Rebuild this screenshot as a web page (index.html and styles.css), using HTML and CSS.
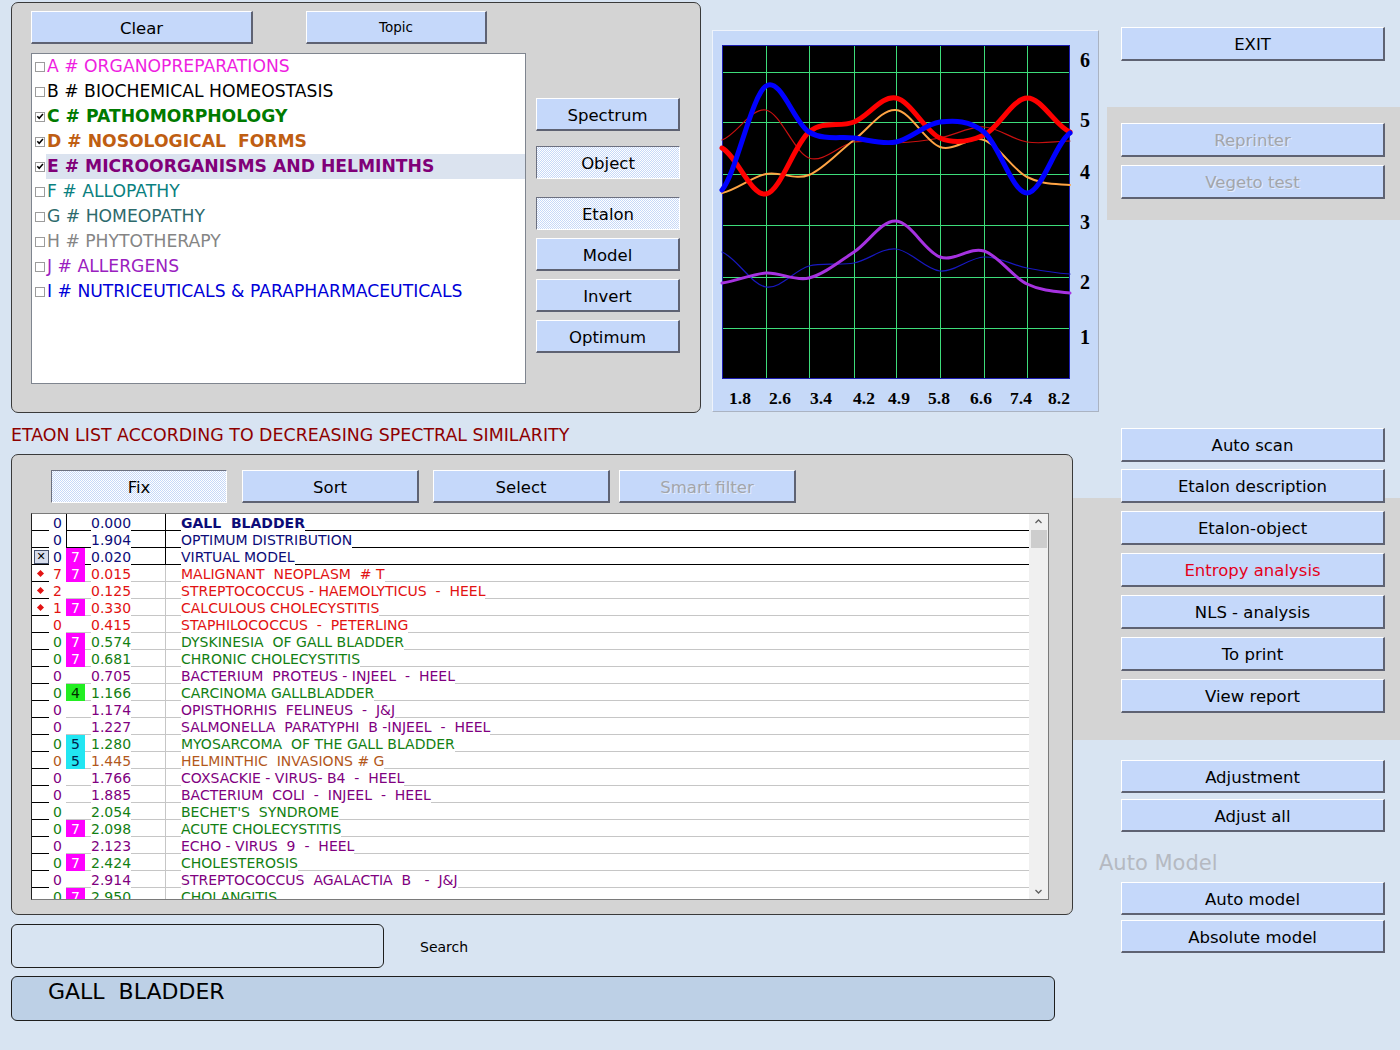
FILE: index.html
```html
<!DOCTYPE html>
<html>
<head>
<meta charset="utf-8">
<title>Etalon list</title>
<link rel="stylesheet" href="styles.css">
</head>
<body>
<div class="app">
  <div class="left">
    <div class="top-row">
      <section class="panel topic-panel">
        <div class="topic-head">
          <div class="btn clear-btn">Clear</div>
          <div class="btn topic-btn">Topic</div>
        </div>
        <div class="topic-body">
          <div class="listbox">
            <div class="item c-a"><span class="cb"></span><span class="it">A # ORGANOPREPARATIONS</span></div>
            <div class="item c-b"><span class="cb"></span><span class="it">B # BIOCHEMICAL HOMEOSTASIS</span></div>
            <div class="item c-c bold"><span class="cb"><svg viewBox="0 0 9 9" width="9" height="9"><path d="M1.5 4.3 L3.6 6.6 L7.8 1.8" fill="none" stroke="#000" stroke-width="1.7"/></svg></span><span class="it">C # PATHOMORPHOLOGY</span></div>
            <div class="item c-d bold"><span class="cb"><svg viewBox="0 0 9 9" width="9" height="9"><path d="M1.5 4.3 L3.6 6.6 L7.8 1.8" fill="none" stroke="#000" stroke-width="1.7"/></svg></span><span class="it">D # NOSOLOGICAL  FORMS</span></div>
            <div class="item c-e bold sel"><span class="cb"><svg viewBox="0 0 9 9" width="9" height="9"><path d="M1.5 4.3 L3.6 6.6 L7.8 1.8" fill="none" stroke="#000" stroke-width="1.7"/></svg></span><span class="it">E # MICROORGANISMS AND HELMINTHS</span></div>
            <div class="item c-f"><span class="cb"></span><span class="it">F # ALLOPATHY</span></div>
            <div class="item c-g"><span class="cb"></span><span class="it">G # HOMEOPATHY</span></div>
            <div class="item c-h"><span class="cb"></span><span class="it">H # PHYTOTHERAPY</span></div>
            <div class="item c-j"><span class="cb"></span><span class="it">J # ALLERGENS</span></div>
            <div class="item c-i"><span class="cb"></span><span class="it">I # NUTRICEUTICALS &amp; PARAPHARMACEUTICALS</span></div>
          </div>
          <div class="side-btns">
            <div class="btn sb-spectrum">Spectrum</div>
            <div class="btn pressed sb-object">Object</div>
            <div class="btn pressed sb-etalon">Etalon</div>
            <div class="btn sb-next">Model</div>
            <div class="btn sb-next">Invert</div>
            <div class="btn sb-next">Optimum</div>
          </div>
        </div>
      </section>
      <section class="chart-panel">
        <svg class="chart" width="385" height="380" viewBox="712 31 385 380">
          <rect x="721.5" y="45.5" width="347" height="333" fill="#000" stroke="#1c1cb0"/>
          <g stroke="#3ddc7a" stroke-width="1">
            <line x1="765.5" y1="46" x2="765.5" y2="378"/>
            <line x1="808.5" y1="46" x2="808.5" y2="378"/>
            <line x1="853.5" y1="46" x2="853.5" y2="378"/>
            <line x1="895.5" y1="46" x2="895.5" y2="378"/>
            <line x1="939.5" y1="46" x2="939.5" y2="378"/>
            <line x1="983.5" y1="46" x2="983.5" y2="378"/>
            <line x1="1026.5" y1="46" x2="1026.5" y2="378"/>
            <line x1="722" y1="72.5" x2="1068" y2="72.5"/>
            <line x1="722" y1="122.5" x2="1068" y2="122.5"/>
            <line x1="722" y1="174.5" x2="1068" y2="174.5"/>
            <line x1="722" y1="225.5" x2="1068" y2="225.5"/>
            <line x1="722" y1="277.5" x2="1068" y2="277.5"/>
            <line x1="722" y1="328.5" x2="1068" y2="328.5"/>
          </g>
          <g fill="none" stroke-linecap="round" stroke-linejoin="round">
            <path stroke="#1818c0" stroke-width="1.2" d="M721 252 C735.5 257.8 750.5 284.7 765 287 C779.5 289.3 793.5 270 808 266 C822.5 262 838.5 265.8 853 263 C867.5 260.2 880.5 247.7 895 249 C909.5 250.3 924.5 269.7 939 271 C953.5 272.3 968.5 257.5 983 257 C997.5 256.5 1011.5 265.2 1026 268 C1040.5 270.8 1054.5 273 1069 274"/>
            <path stroke="#a632e0" stroke-width="3" d="M721 283 C735.5 281.3 750.5 273.8 765 273 C779.5 272.2 793.5 281.5 808 278 C822.5 274.5 838.5 261.5 853 252 C867.5 242.5 880.5 220.2 895 221 C909.5 221.8 924.5 252 939 257 C953.5 262 968.5 246.5 983 251 C997.5 255.5 1011.5 277 1026 284 C1040.5 291 1054.5 291.5 1069 293"/>
            <path stroke="#c81010" stroke-width="1.2" d="M721 140 C735.5 135 750.5 107 765 110 C779.5 113 793.5 152.7 808 158 C822.5 163.3 838.5 144.5 853 142 C867.5 139.5 880.5 143.7 895 143 C909.5 142.3 924.5 140.7 939 138 C953.5 135.3 968.5 126.3 983 127 C997.5 127.7 1011.5 139.7 1026 142 C1040.5 144.3 1054.5 141.2 1069 141"/>
            <path stroke="#ffa444" stroke-width="2" d="M721 193 C735.5 189.8 750.5 177 765 174 C779.5 171 793.5 180.7 808 175 C822.5 169.3 838.5 150.8 853 140 C867.5 129.2 880.5 108.8 895 110 C909.5 111.2 924.5 142 939 147 C953.5 152 968.5 135 983 140 C997.5 145 1011.5 169.5 1026 177 C1040.5 184.5 1054.5 183.7 1069 185"/>
            <path stroke="#ff0000" stroke-width="5" d="M721 148 C735.5 155.7 750.5 196.7 765 194 C779.5 191.3 793.5 144 808 132 C822.5 120 838.5 127.7 853 122 C867.5 116.3 880.5 95.3 895 98 C909.5 100.7 924.5 131.8 939 138 C953.5 144.2 968.5 141.7 983 135 C997.5 128.3 1011.5 98.5 1026 98 C1040.5 97.5 1054.5 126.3 1069 132"/>
            <path stroke="#0000ff" stroke-width="5" d="M721 190 C735.5 172.7 750.5 95.7 765 86 C779.5 76.3 793.5 123.3 808 132 C822.5 140.7 838.5 136.3 853 138 C867.5 139.7 880.5 144.7 895 142 C909.5 139.3 924.5 123.7 939 122 C953.5 120.3 968.5 120.2 983 132 C997.5 143.8 1011.5 192.8 1026 193 C1040.5 193.2 1054.5 143 1069 133"/>
          </g>
          <g class="ax" text-anchor="middle">
            <text x="1084" y="67">6</text>
            <text x="1084" y="127">5</text>
            <text x="1084" y="179">4</text>
            <text x="1084" y="229">3</text>
            <text x="1084" y="289">2</text>
            <text x="1084" y="344">1</text>
          </g>
          <g class="ax ax-x" text-anchor="middle">
            <text x="739" y="404">1.8</text>
            <text x="779" y="404">2.6</text>
            <text x="820" y="404">3.4</text>
            <text x="863" y="404">4.2</text>
            <text x="898" y="404">4.9</text>
            <text x="938" y="404">5.8</text>
            <text x="980" y="404">6.6</text>
            <text x="1020" y="404">7.4</text>
            <text x="1058" y="404">8.2</text>
          </g>
        </svg>
      </section>
    </div>

    <h1 class="list-title">ETAON LIST ACCORDING TO DECREASING SPECTRAL SIMILARITY</h1>

    <section class="panel list-panel">
      <div class="tool-row">
        <div class="btn pressed tb-fix">Fix</div>
        <div class="btn tb-sort">Sort</div>
        <div class="btn tb-select">Select</div>
        <div class="btn disabled tb-smart">Smart filter</div>
      </div>
      <div class="grid">
        <div class="rows">
          <div class="row hd nv"><span class="mk"></span><span class="n">0</span><span class="b vl"></span><span class="v"><span class="t">0.000</span></span><span class="nm"><span class="t strong">GALL  BLADDER</span></span></div>
          <div class="row hd nv"><span class="mk"></span><span class="n">0</span><span class="b vl"></span><span class="v"><span class="t">1.904</span></span><span class="nm"><span class="t">OPTIMUM DISTRIBUTION</span></span></div>
          <div class="row hd nv"><span class="mk"><span class="xbox">✕</span></span><span class="n">0</span><span class="b m">7</span><span class="v"><span class="t">0.020</span></span><span class="nm"><span class="t">VIRTUAL MODEL</span></span></div>
          <div class="row rd"><span class="mk"><span class="dot"></span></span><span class="n">7</span><span class="b m">7</span><span class="v"><span class="t">0.015</span></span><span class="nm"><span class="t">MALIGNANT  NEOPLASM  # T</span></span></div>
          <div class="row rd"><span class="mk"><span class="dot"></span></span><span class="n">2</span><span class="b"></span><span class="v"><span class="t">0.125</span></span><span class="nm"><span class="t">STREPTOCOCCUS - HAEMOLYTICUS  -  HEEL</span></span></div>
          <div class="row rd"><span class="mk"><span class="dot"></span></span><span class="n">1</span><span class="b m">7</span><span class="v"><span class="t">0.330</span></span><span class="nm"><span class="t">CALCULOUS CHOLECYSTITIS</span></span></div>
          <div class="row rd"><span class="mk"></span><span class="n">0</span><span class="b"></span><span class="v"><span class="t">0.415</span></span><span class="nm"><span class="t">STAPHILOCOCCUS  -  PETERLING</span></span></div>
          <div class="row gr"><span class="mk"></span><span class="n">0</span><span class="b m">7</span><span class="v"><span class="t">0.574</span></span><span class="nm"><span class="t">DYSKINESIA  OF GALL BLADDER</span></span></div>
          <div class="row gr"><span class="mk"></span><span class="n">0</span><span class="b m">7</span><span class="v"><span class="t">0.681</span></span><span class="nm"><span class="t">CHRONIC CHOLECYSTITIS</span></span></div>
          <div class="row pu"><span class="mk"></span><span class="n">0</span><span class="b"></span><span class="v"><span class="t">0.705</span></span><span class="nm"><span class="t">BACTERIUM  PROTEUS - INJEEL  -  HEEL</span></span></div>
          <div class="row gr"><span class="mk"></span><span class="n">0</span><span class="b g">4</span><span class="v"><span class="t">1.166</span></span><span class="nm"><span class="t">CARCINOMA GALLBLADDER</span></span></div>
          <div class="row pu"><span class="mk"></span><span class="n">0</span><span class="b"></span><span class="v"><span class="t">1.174</span></span><span class="nm"><span class="t">OPISTHORHIS  FELINEUS  -  J&amp;J</span></span></div>
          <div class="row pu"><span class="mk"></span><span class="n">0</span><span class="b"></span><span class="v"><span class="t">1.227</span></span><span class="nm"><span class="t">SALMONELLA  PARATYPHI  B -INJEEL  -  HEEL</span></span></div>
          <div class="row gr"><span class="mk"></span><span class="n">0</span><span class="b c">5</span><span class="v"><span class="t">1.280</span></span><span class="nm"><span class="t">MYOSARCOMA  OF THE GALL BLADDER</span></span></div>
          <div class="row br"><span class="mk"></span><span class="n">0</span><span class="b c">5</span><span class="v"><span class="t">1.445</span></span><span class="nm"><span class="t">HELMINTHIC  INVASIONS # G</span></span></div>
          <div class="row pu"><span class="mk"></span><span class="n">0</span><span class="b"></span><span class="v"><span class="t">1.766</span></span><span class="nm"><span class="t">COXSACKIE - VIRUS- B4  -  HEEL</span></span></div>
          <div class="row pu"><span class="mk"></span><span class="n">0</span><span class="b"></span><span class="v"><span class="t">1.885</span></span><span class="nm"><span class="t">BACTERIUM  COLI  -  INJEEL  -  HEEL</span></span></div>
          <div class="row gr"><span class="mk"></span><span class="n">0</span><span class="b"></span><span class="v"><span class="t">2.054</span></span><span class="nm"><span class="t">BECHET'S  SYNDROME</span></span></div>
          <div class="row gr"><span class="mk"></span><span class="n">0</span><span class="b m">7</span><span class="v"><span class="t">2.098</span></span><span class="nm"><span class="t">ACUTE CHOLECYSTITIS</span></span></div>
          <div class="row pu"><span class="mk"></span><span class="n">0</span><span class="b"></span><span class="v"><span class="t">2.123</span></span><span class="nm"><span class="t">ECHO - VIRUS  9  -  HEEL</span></span></div>
          <div class="row gr"><span class="mk"></span><span class="n">0</span><span class="b m">7</span><span class="v"><span class="t">2.424</span></span><span class="nm"><span class="t">CHOLESTEROSIS</span></span></div>
          <div class="row pu"><span class="mk"></span><span class="n">0</span><span class="b"></span><span class="v"><span class="t">2.914</span></span><span class="nm"><span class="t">STREPTOCOCCUS  AGALACTIA  B   -  J&amp;J</span></span></div>
          <div class="row gr"><span class="mk"></span><span class="n">0</span><span class="b m">7</span><span class="v"><span class="t">2.950</span></span><span class="nm"><span class="t">CHOLANGITIS</span></span></div>
        </div>
        <div class="scrollbar">
          <svg class="arr" width="19" height="14" viewBox="0 0 19 14"><path d="M6.5 9 L9.5 6 L12.5 9" fill="none" stroke="#606060" stroke-width="1.3"/></svg>
          <div class="thumb"></div>
          <div class="track"></div>
          <svg class="arr" width="19" height="14" viewBox="0 0 19 14"><path d="M6.5 5 L9.5 8 L12.5 5" fill="none" stroke="#606060" stroke-width="1.3"/></svg>
        </div>
      </div>
    </section>

    <div class="search-row">
      <div class="search-box"></div>
      <span class="search-label">Search</span>
    </div>
    <div class="result-box">GALL  BLADDER</div>
  </div>

  <aside class="right">
    <div class="btn rbtn exit">EXIT</div>
    <div class="band band1">
      <div class="btn rbtn disabled">Reprinter</div>
      <div class="btn rbtn disabled">Vegeto test</div>
    </div>
    <div class="btn rbtn autoscan">Auto scan</div>
    <div class="btn rbtn etdesc">Etalon description</div>
    <div class="band band2">
      <div class="btn rbtn">Etalon-object</div>
      <div class="btn rbtn red">Entropy analysis</div>
      <div class="btn rbtn">NLS - analysis</div>
      <div class="btn rbtn">To print</div>
      <div class="btn rbtn">View report</div>
    </div>
    <div class="btn rbtn adjust">Adjustment</div>
    <div class="btn rbtn adjall">Adjust all</div>
    <div class="automodel-label">Auto Model</div>
    <div class="btn rbtn automodel">Auto model</div>
    <div class="btn rbtn absmodel">Absolute model</div>
  </aside>
</div>
</body>
</html>
```

FILE: styles.css
```css
* { box-sizing: border-box; }

html, body {
  margin: 0;
  padding: 0;
}

body {
  width: 1400px;
  height: 1050px;
  overflow: hidden;
  background: #d8e4f2;
  font-family: "DejaVu Sans", sans-serif;
  color: #000;
}

.app {
  display: flex;
  align-items: flex-start;
  height: 1050px;
}

.left {
  width: 1073px;
  flex: none;
  padding-left: 11px;
}

/* ---------- generic buttons ---------- */
.btn {
  height: 33px;
  padding-top: 3px;
  background: #c5d8fa;
  border-style: solid;
  border-width: 1px 2px 2px 1px;
  border-color: #ffffff #5e6272 #5e6272 #ffffff;
  display: flex;
  align-items: center;
  justify-content: center;
  font-size: 16.5px;
  line-height: 20px;
  white-space: pre;
  color: #000;
}

.btn.pressed {
  border-width: 1px;
  border-color: #6c7080 #ffffff #ffffff #6c7080;
  background: repeating-conic-gradient(#c6d8f8 0 25%, #ffffff 0 50%) 0 0 / 2px 2px;
}

.btn.disabled {
  color: #a3a5aa;
  text-shadow: 1px 1px 0 rgba(255, 255, 255, 0.55);
}

.btn.red { color: #e4001a; }

/* ---------- panels ---------- */
.panel {
  background: #d4d4d4;
  border: 1px solid #3a3a3a;
  border-radius: 7px;
}

.top-row {
  display: flex;
  align-items: flex-start;
  padding-top: 2px;
}

.topic-panel {
  flex: none;
  width: 690px;
  height: 411px;
  padding: 8px 0 0 19px;
}

.topic-head {
  display: flex;
}

.clear-btn { width: 222px; }

.topic-btn {
  width: 181px;
  margin-left: 53px;
  font-size: 13.5px;
  padding-top: 0;
}

.topic-body {
  display: flex;
  margin-top: 9px;
}

.listbox {
  width: 495px;
  height: 331px;
  background: #fff;
  border: 1px solid #7f858f;
  padding: 0 0 0 3px;
}

.item {
  display: flex;
  align-items: center;
  height: 25px;
  font-size: 17.2px;
  line-height: 25px;
  white-space: pre;
}

.item.bold { font-weight: bold; }

.cb {
  width: 10px;
  height: 10px;
  flex: none;
  border: 1px solid #9c9c9c;
  background: #fff;
  display: flex;
  align-items: center;
  justify-content: center;
  margin-right: 1px;
}

.cb svg { display: block; }

.it {
  flex: 1;
  padding-left: 1px;
  height: 25px;
}

.sel .it { background: #dbe3ef; }

.c-a { color: #ee1ee0; }
.c-b { color: #000; }
.c-c { color: #007a00; }
.c-d { color: #bf5e12; }
.c-e { color: #800078; }
.c-f { color: #0a8080; }
.c-g { color: #2d6a6c; }
.c-h { color: #858585; }
.c-j { color: #9a20c0; }
.c-i { color: #0000d8; }

.side-btns {
  margin-left: 10px;
  width: 144px;
  display: flex;
  flex-direction: column;
}

.side-btns .btn { height: 33px; }
.sb-spectrum { margin-top: 45px; }
.sb-object { margin-top: 15px; }
.sb-etalon { margin-top: 18px; }
.sb-next { margin-top: 8px; }

/* ---------- chart ---------- */
.chart-panel {
  flex: none;
  width: 387px;
  height: 382px;
  margin: 28px 0 0 11px;
  background: #c6d9f8;
  border: 1px solid #aab3c2;
  border-top-color: #eef3fb;
  border-left-color: #eef3fb;
}

.chart { display: block; }

.ax text {
  font-family: "Liberation Serif", serif;
  font-weight: bold;
  font-size: 20px;
  fill: #000;
}

.ax-x text { font-size: 17.5px; }

/* ---------- list ---------- */
.list-title {
  margin: 12px 0 9px 0;
  height: 20px;
  font-size: 17.4px;
  line-height: 20px;
  font-weight: normal;
  color: #8e0000;
  white-space: nowrap;
}

.list-panel {
  width: 1062px;
  height: 461px;
  padding: 15px 0 0 19px;
}

.tool-row {
  display: flex;
  margin-left: 20px;
}

.tool-row .btn { width: 177px; }
.tool-row .tb-fix { width: 176px; }
.tb-sort { margin-left: 15px; }
.tb-select { margin-left: 14px; }
.tb-smart { margin-left: 9px; }

.grid {
  margin-top: 10px;
  width: 1018px;
  height: 387px;
  border: 1px solid #7a7a7a;
  border-left-color: #202020;
  display: flex;
  background: #fff;
}

.rows {
  width: 997px;
  height: 385px;
  overflow: hidden;
}

.row {
  display: flex;
  height: 17px;
  font-size: 14px;
  line-height: 18px;
  white-space: pre;
  background: linear-gradient(to top, #c6c6c6 1px, #ffffff 1px);
}

.row.hd {
  background: linear-gradient(to top, #000 1px, #ffffff 1px);
}

.nv { color: #0c0c78; }
.rd { color: #e21212; }
.gr { color: #138013; }
.pu { color: #800080; }
.br { color: #b2581c; }

.mk {
  width: 17px;
  flex: none;
  background: linear-gradient(to top, #000 1px, transparent 1px);
  display: flex;
  align-items: center;
  justify-content: center;
}

.n {
  width: 17px;
  flex: none;
  background: #fff;
  text-align: right;
  padding-right: 4px;
}

.b {
  width: 19px;
  flex: none;
  text-align: center;
}

.b.vl { border-left: 1px solid #000; }
.b.m { background: #ff00ff; color: #ffffff; }
.b.g { background: #22ee22; color: #003000; }
.b.c { background: #22e6f2; color: #00204a; }

.v {
  width: 81px;
  flex: none;
  padding-left: 6px;
  border-right: 1px solid #c6c6c6;
}

.hd .v { border-right-color: #000; }

.t {
  display: inline-block;
  height: 17px;
  background: #fff;
}

.strong { font-weight: bold; }

.nm {
  flex: 1;
  padding-left: 15px;
}

.xbox {
  width: 15px;
  height: 14px;
  margin-left: 1px;
  border: 1px solid #44506a;
  background: #d6dded;
  color: #000;
  font-size: 11px;
  line-height: 12px;
  text-align: center;
}

.dot {
  width: 5px;
  height: 5px;
  background: #e21212;
  transform: rotate(45deg);
  margin-left: -1px;
}

.scrollbar {
  width: 19px;
  height: 385px;
  background: #f0f0f0;
  display: flex;
  flex-direction: column;
}

.arr { display: block; flex: none; }

.thumb {
  margin: 2px 1px 0 2px;
  height: 18px;
  background: #cdcdcd;
  flex: none;
}

.track { flex: 1; }

/* ---------- bottom ---------- */
.search-row {
  display: flex;
  align-items: center;
  margin-top: 9px;
}

.search-box {
  width: 373px;
  height: 44px;
  border: 1px solid #1e1e1e;
  border-radius: 6px;
}

.search-label {
  margin-left: 36px;
  font-size: 14px;
  padding-top: 2px;
}

.result-box {
  margin-top: 8px;
  width: 1044px;
  height: 45px;
  background: #bdd0e6;
  border: 1px solid #1e1e1e;
  border-radius: 6px;
  padding: 1px 0 0 36px;
  font-size: 22px;
  line-height: 28px;
  white-space: pre;
}

/* ---------- right column ---------- */
.right {
  width: 327px;
  flex: none;
  display: flex;
  flex-direction: column;
}

.rbtn {
  width: 264px;
  margin-left: 48px;
}

.exit { margin-top: 27px; height: 34px; }

.band {
  background: #d4d4d4;
  display: flex;
  flex-direction: column;
}

.band1 {
  margin: 46px 0 0 34px;
  height: 113px;
  padding-top: 16px;
  gap: 8px;
}

.band1 .rbtn { margin-left: 14px; height: 34px; }

.autoscan { margin-top: 208px; height: 34px; }

.etdesc {
  margin-top: 7px;
  height: 34px;
  position: relative;
  z-index: 1;
}

.band2 {
  margin-top: -5px;
  height: 242px;
  padding-top: 13px;
  gap: 8px;
}

.band2 .rbtn { height: 34px; }

.adjust { margin-top: 20px; }
.adjall { margin-top: 6px; }

.automodel-label {
  margin: 18px 0 0 26px;
  height: 26px;
  font-size: 21px;
  line-height: 26px;
  color: #b5b9c1;
}

.automodel { margin-top: 6px; }
.absmodel { margin-top: 5px; }
```
